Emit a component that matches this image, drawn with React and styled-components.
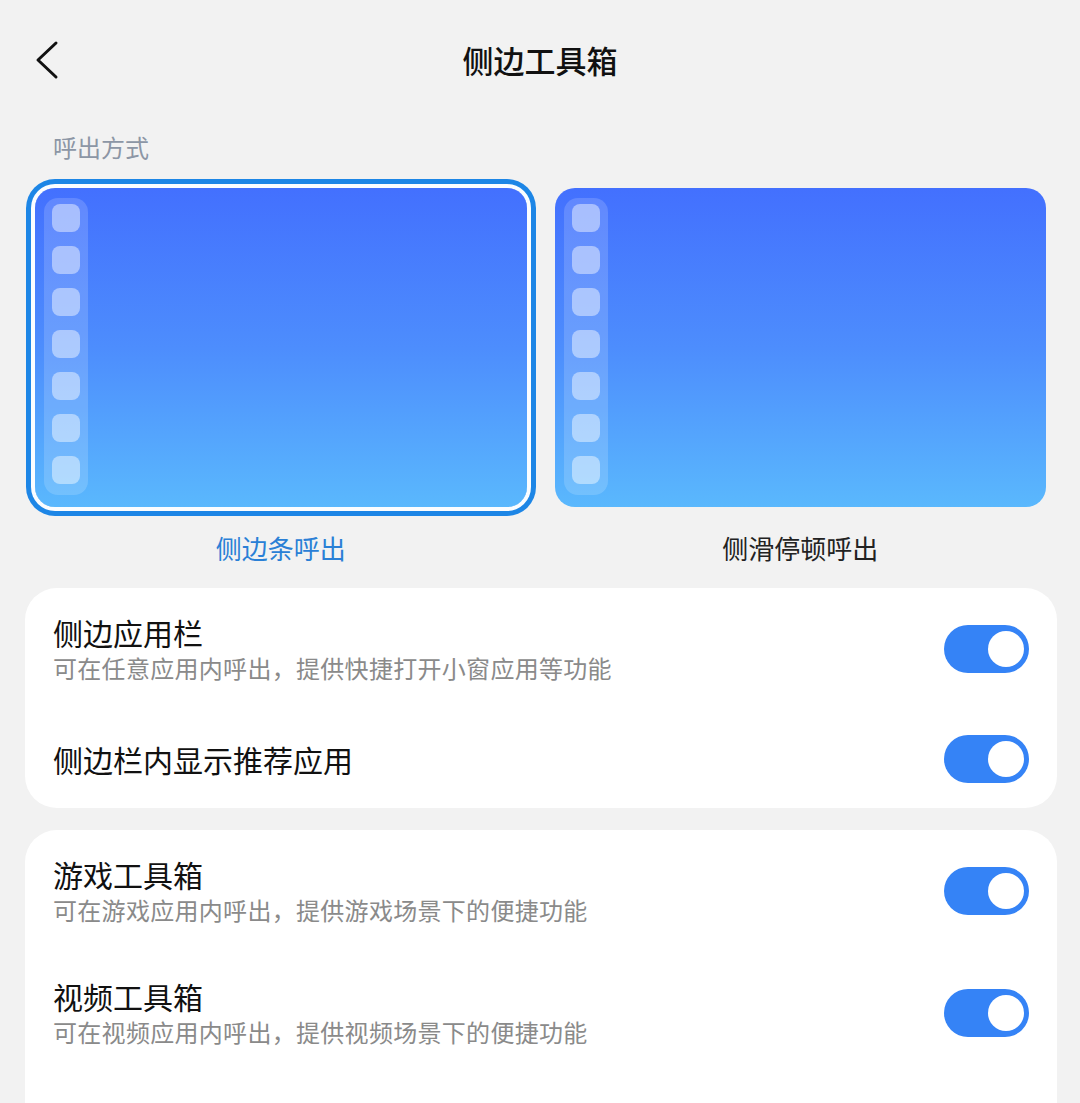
import React from "react"
import styled, { createGlobalStyle } from "styled-components"

const GlobalStyle = createGlobalStyle`
    body {
        margin: 0;
        background: #f2f2f2;
        font-family: "Noto Sans CJK SC", "Noto Sans", sans-serif;
        color: #111;
    }
`

const Page = styled.div`
    width: 1080px;
    min-height: 1103px;
    overflow: hidden;
`

const Header = styled.div`
    height: 120px;
    display: grid;
    grid-template-columns: 1fr auto 1fr;
    align-items: center;
`

const BackButton = styled.div`
    padding-left: 34px;
    display: flex;
    align-items: center;
`

const Title = styled.div`
    font-size: 31px;
    font-weight: 500;
    color: #111;
    line-height: 40px;
`

const SectionLabel = styled.div`
    margin-top: 10px;
    padding-left: 53px;
    font-size: 24px;
    line-height: 34px;
    color: #8c96a5;
`

const PickerGrid = styled.div`
    margin-top: 24px;
    padding: 0 34px 0 35px;
    display: grid;
    grid-template-columns: 1fr 1fr;
    column-gap: 28px;
`

const Option = styled.div`
    display: flex;
    flex-direction: column;
    align-items: stretch;
`

const Preview = styled.div`
    height: 319px;
    border-radius: 20px;
    background: linear-gradient(to bottom, #4370fe 0%, #4d8dfd 50%, #5ab8fd 100%);
    box-shadow: ${(p) =>
        p.selected ? "0 0 0 4px #fbfdff, 0 0 0 9px #1d86e6" : "none"};
    padding: 10px 0 12px 9px;
    box-sizing: border-box;
    display: flex;
`

const Strip = styled.div`
    width: 44px;
    border-radius: 14px;
    background: rgba(255, 255, 255, 0.16);
    padding: 6px 8px;
    box-sizing: border-box;
    display: flex;
    flex-direction: column;
    gap: 14px;
`

const AppSquare = styled.div`
    width: 28px;
    height: 28px;
    border-radius: 8px;
    background: rgba(255, 255, 255, 0.45);
`

const OptionLabel = styled.div`
    margin-top: 23px;
    text-align: center;
    font-size: 26px;
    line-height: 36px;
    color: ${(p) => (p.selected ? "#2a80d6" : "#222")};
`

const Card = styled.div`
    margin: 22px 23px 0 25px;
    background: #fff;
    border-radius: 32px;
    padding-bottom: ${(p) => p.extra || 0}px;
`

const Row = styled.div`
    min-height: ${(p) => (p.tall ? 122 : 98)}px;
    padding: 0 28px;
    display: flex;
    align-items: center;
    justify-content: space-between;
`

const RowText = styled.div`
    display: flex;
    flex-direction: column;
`

const RowTitle = styled.div`
    font-size: 30px;
    line-height: 38px;
    color: #111;
`

const RowSub = styled.div`
    font-size: 24px;
    line-height: 34px;
    color: #8a8a8a;
    letter-spacing: 0.3px;
`

const Toggle = styled.div`
    width: 85px;
    height: 48px;
    border-radius: 24px;
    background: ${(p) => (p.on ? "#3583f6" : "#d8d8d8")};
    padding: 6px 5px;
    box-sizing: border-box;
    display: flex;
    justify-content: ${(p) => (p.on ? "flex-end" : "flex-start")};
`

const Knob = styled.div`
    width: 36px;
    height: 36px;
    border-radius: 50%;
    background: #fff;
`

const ChevronLeft = () => (
    <svg width="26" height="40" viewBox="0 0 26 40">
        <path
            d="M22 3 L4 20 L22 37"
            fill="none"
            stroke="#111"
            strokeWidth="3"
            strokeLinecap="round"
            strokeLinejoin="round"
        />
    </svg>
)

const PreviewCard = ({ selected, label }) => (
    <Option>
        <Preview selected={selected}>
            <Strip>
                {[0, 1, 2, 3, 4, 5, 6].map((i) => (
                    <AppSquare key={i} />
                ))}
            </Strip>
        </Preview>
        <OptionLabel selected={selected}>{label}</OptionLabel>
    </Option>
)

const SettingRow = ({ title, sub }) => (
    <Row tall={!!sub}>
        <RowText>
            <RowTitle>{title}</RowTitle>
            {sub && <RowSub>{sub}</RowSub>}
        </RowText>
        <Toggle on>
            <Knob />
        </Toggle>
    </Row>
)

const App = () => {
    return (
        <Page>
            <GlobalStyle />
            <Header>
                <BackButton>
                    <ChevronLeft />
                </BackButton>
                <Title>侧边工具箱</Title>
                <div />
            </Header>
            <SectionLabel>呼出方式</SectionLabel>
            <PickerGrid>
                <PreviewCard selected label="侧边条呼出" />
                <PreviewCard label="侧滑停顿呼出" />
            </PickerGrid>
            <Card>
                <SettingRow
                    title="侧边应用栏"
                    sub="可在任意应用内呼出，提供快捷打开小窗应用等功能"
                />
                <SettingRow title="侧边栏内显示推荐应用" />
            </Card>
            <Card extra={80}>
                <SettingRow
                    title="游戏工具箱"
                    sub="可在游戏应用内呼出，提供游戏场景下的便捷功能"
                />
                <SettingRow
                    title="视频工具箱"
                    sub="可在视频应用内呼出，提供视频场景下的便捷功能"
                />
            </Card>
        </Page>
    )
}

export default App
